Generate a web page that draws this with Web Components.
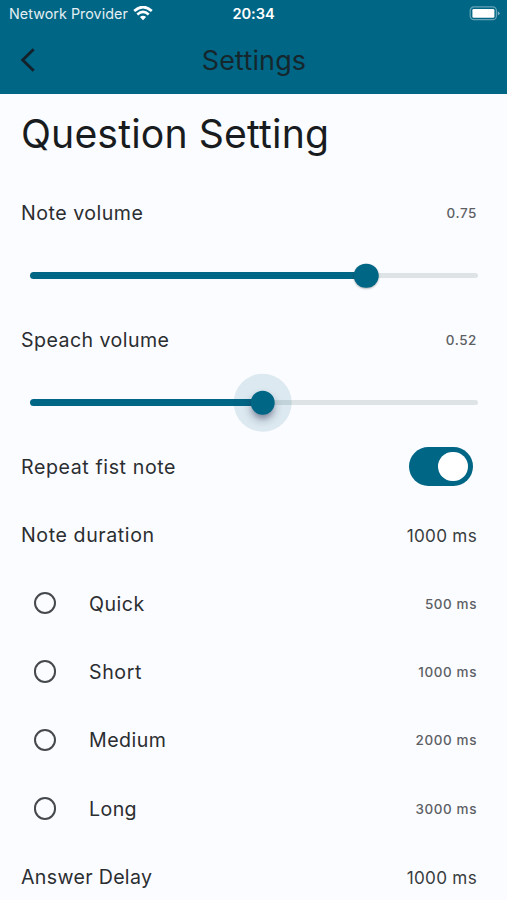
<!DOCTYPE html>
<html lang="en">
<head>
<meta charset="utf-8">
<title>Settings</title>
<style>
  html { overflow: hidden; }
  body {
    margin: 0; width: 507px; height: 900px; overflow: hidden;
    background: #fbfcff; color: #191c1e;
    font-family: Inter, "Liberation Sans", sans-serif;
    --primary: #006685; --track: #dee3e6; --variant: #40454a;
  }
</style>
</head>
<body>
<settings-page></settings-page>
<script>
const define = (name, html, setup) => {
  const template = document.createElement('template');
  template.innerHTML = html;
  customElements.define(name, class extends HTMLElement {
    constructor() {
      super();
      this.attachShadow({ mode: 'open' }).append(template.content.cloneNode(true));
    }
    connectedCallback() { if (setup) setup(this); }
  });
};

define('status-bar', `
<style>
  :host { display: grid; grid-template-columns: 1fr auto 1fr; align-items: center; height: 27px; color: #fff; padding: 0 7px 0 9px; }
  .carrier { display: flex; align-items: center; gap: 5.5px; font-size: 14.3px; letter-spacing: .05px; color: #e3eff3; white-space: nowrap; }
  .time { font-size: 14.6px; font-weight: 600; letter-spacing: -.05px; margin-right: 2px; }
  .battery { justify-self: end; }
  svg { display: block; }
</style>
<div class="carrier"><span>Network Provider</span>
  <svg width="20" height="15" viewBox="0 0 20 15" fill="none" stroke="#fff">
    <path d="M1.2 5.1Q10-3 18.8 5.1" stroke-width="2.7"/>
    <path d="M4.3 8.5Q10 3.3 15.7 8.5" stroke-width="2.6"/>
    <path d="M6.9 11.1Q10 8.3 13.1 11.1L10 14.2Z" fill="#fff" stroke="none"/>
  </svg>
</div>
<div class="time">20:34</div>
<svg class="battery" width="31" height="15" viewBox="0 0 31 15">
  <rect x="1.2" y=".9" width="26.2" height="12.8" rx="3.7" fill="none" stroke="#fff" stroke-opacity=".4" stroke-width="1.2"/>
  <rect x="3.4" y="2.9" width="22" height="8.8" rx="1.3" fill="#fff"/>
  <path d="M28.8 5.2Q30.6 6 30.6 7.3T28.8 9.4Z" fill="#fff" fill-opacity=".5"/>
</svg>`);

define('nav-bar', `
<style>
  :host { display: grid; grid-template-columns: 56px 1fr 56px; align-items: center; height: 65px; }
  svg { display: block; margin-left: 20px; }
  h1 { margin: 0 0 0 1px; text-align: center; font-size: 26.9px; font-weight: 400; letter-spacing: .18px; line-height: 34px; color: #15262d; }
</style>
<svg width="16" height="24" viewBox="0 0 16 24" fill="none" stroke="#13222a" stroke-width="2.9"><path d="M13.7 1.2L2.7 12L13.7 22.8"/></svg>
<h1><slot></slot></h1>`);

define('setting-row', `
<style>
  :host { display: flex; align-items: center; justify-content: space-between; height: 68.45px; padding: 0 30px 0 21px; }
  .label { font-size: 19.6px; letter-spacing: var(--ls, .5px); color: #2b2e31; white-space: nowrap; }
  .value { font-size: 13.47px; font-weight: 500; letter-spacing: var(--vls, .6px); color: #5c6064; white-space: nowrap; }
  :host([large]) .value { font-size: 17.14px; font-weight: 400; color: #383c40; --vls: .3px; }
  :host([option]) { padding-left: 33.5px; }
  .start { display: none; }
  :host([option]) .start { display: block; width: 55.5px; }
  .ring { box-sizing: border-box; width: 22.6px; height: 22.6px; border: 2.6px solid #45494d; border-radius: 50%; margin-top: -1px; }
  .lead { display: flex; align-items: center; }
</style>
<div class="lead"><div class="start"><div class="ring"></div></div><span class="label"><slot></slot></span></div>
<span class="value"><slot name="value"></slot></span>`);

define('volume-slider', `
<style>
  :host { display: block; height: 58.5px; padding: 0 29.5px 0 30px; }
  .area { position: relative; display: flex; align-items: center; height: 57.3px; }
  .on { flex: 0 0 var(--at); height: 7.3px; border-radius: 4px 0 0 4px; background: var(--primary); }
  .off { flex: 1; height: 4.9px; border-radius: 0 3px 3px 0; background: var(--track); }
  .thumb, .halo { position: absolute; left: var(--at); top: 50%; transform: translate(-50%, -50%); border-radius: 50%; }
  .thumb { width: 24.6px; height: 24.6px; background: var(--primary); box-shadow: 0 1px 2px rgba(0,0,0,.3); }
  .halo { display: none; width: 58.6px; height: 58.6px; background: rgba(0,102,133,.12); }
  :host([active]) .halo { display: block; }
  :host([active]) .thumb { box-shadow: 0 5px 9px rgba(20,20,60,.32), 0 5px 5px -2px rgba(20,20,60,.2); }
</style>
<div class="area"><div class="on"></div><div class="off"></div><div class="halo"></div><div class="thumb"></div></div>`,
el => el.style.setProperty('--at', el.getAttribute('at')));

define('toggle-switch', `
<style>
  :host { display: flex; box-sizing: border-box; align-items: center; justify-content: flex-end; width: 64px; height: 39.2px; padding-right: 4.8px; margin: 0 4.2px 0 0; border-radius: 20px; background: var(--primary); }
  div { width: 29.6px; height: 29.6px; border-radius: 50%; background: #fff; }
</style><div></div>`);

define('settings-page', `
<style>
  :host { display: flex; flex-direction: column; }
  header { background: var(--primary); height: 93.6px; }
  h2 { margin: 0; height: 85px; box-sizing: border-box; padding: 15px 0 0 21px; font-size: 39.2px; line-height: 49px; font-weight: 400; letter-spacing: .13px; white-space: nowrap; }
</style>
<header><status-bar></status-bar><nav-bar>Settings</nav-bar></header>
<h2>Question Setting</h2>
<setting-row>Note volume<span slot="value">0.75</span></setting-row>
<volume-slider at="336px"></volume-slider>
<setting-row style="--ls:.43px">Speach volume<span slot="value">0.52</span></setting-row>
<volume-slider at="232.6px" active></volume-slider>
<setting-row style="--ls:.6px">Repeat fist note<toggle-switch slot="value"></toggle-switch></setting-row>
<setting-row large style="--ls:.58px">Note duration<span slot="value">1000 ms</span></setting-row>
<setting-row option>Quick<span slot="value">500 ms</span></setting-row>
<setting-row option style="--ls:.6px">Short<span slot="value">1000 ms</span></setting-row>
<setting-row option style="--ls:.45px">Medium<span slot="value">2000 ms</span></setting-row>
<setting-row option style="--ls:.4px">Long<span slot="value">3000 ms</span></setting-row>
<setting-row large style="--ls:.32px">Answer Delay<span slot="value">1000 ms</span></setting-row>`);
</script>
</body>
</html>
